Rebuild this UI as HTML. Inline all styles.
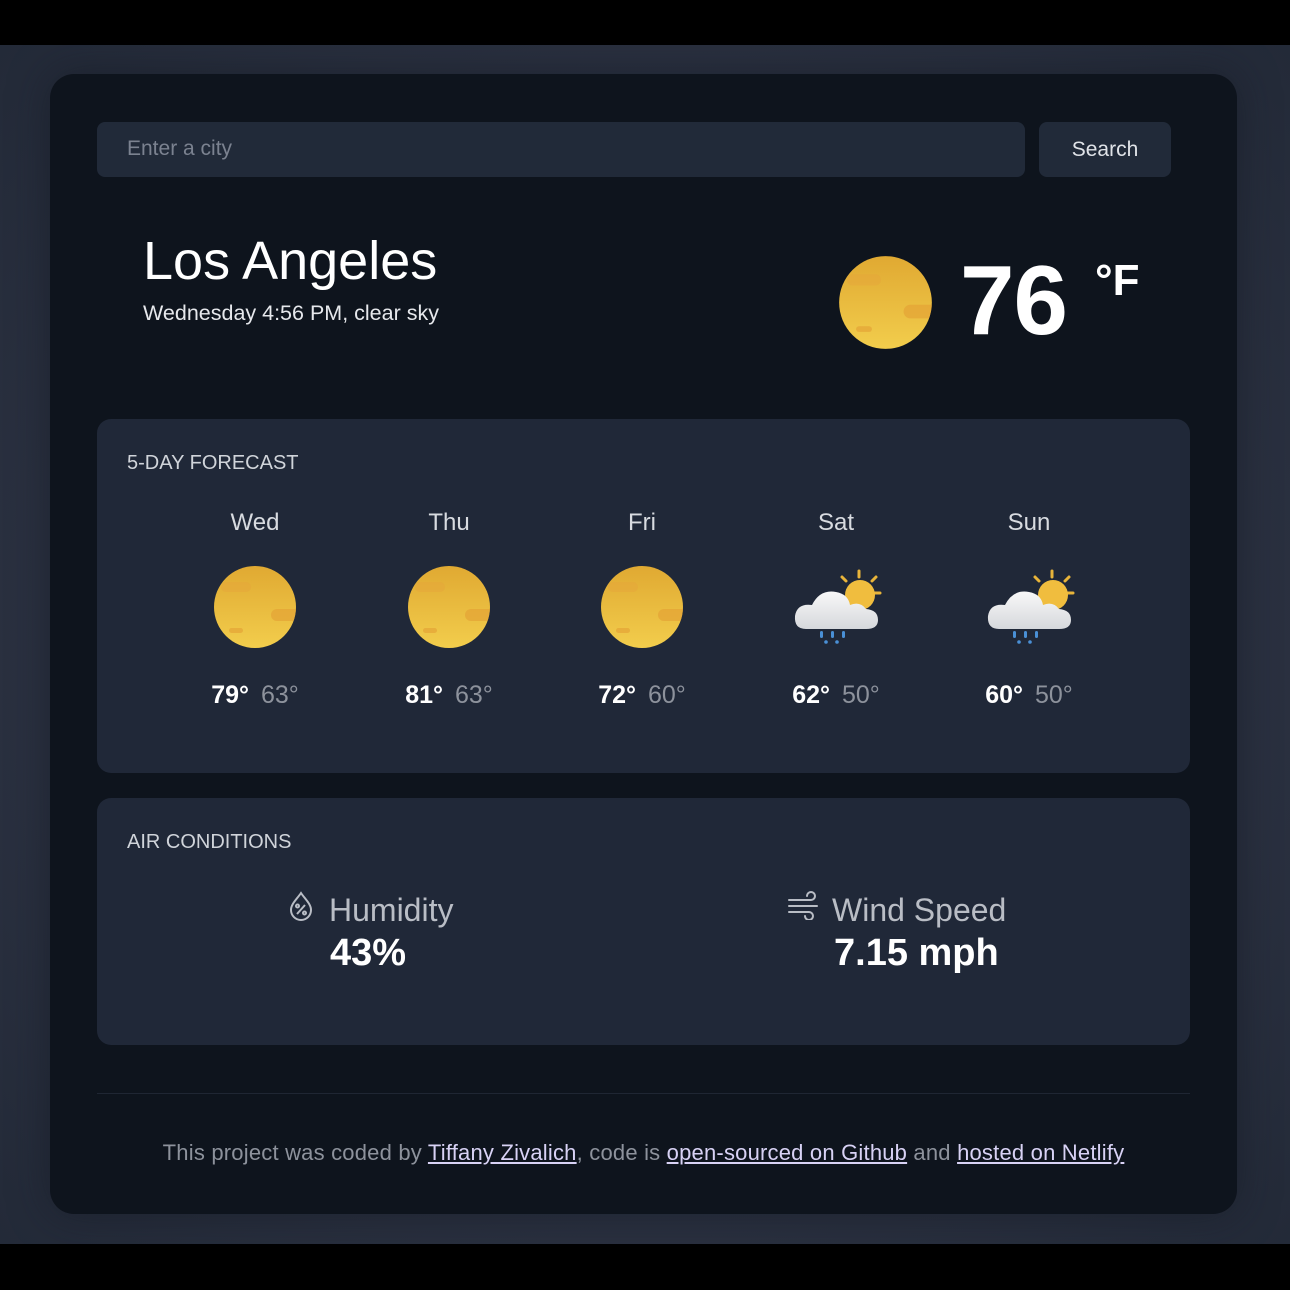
<!DOCTYPE html>
<html><head><style>
*{margin:0;padding:0;box-sizing:border-box}
body{width:1290px;height:1290px;background:#000;font-family:"Liberation Sans",sans-serif;position:relative;overflow:hidden}
.bg{position:absolute;left:0;top:45px;width:1290px;height:1199px;background:radial-gradient(ellipse at center,#3a4150 0%,#2c3242 60%,#232a38 100%)}
.card{position:absolute;left:50px;top:74px;width:1187px;height:1140px;background:#0e141d;border-radius:24px;box-shadow:0 0 40px rgba(20,25,35,.6)}
.abs{position:absolute}
.input{left:47px;top:48px;width:928px;height:55px;background:#212a39;border-radius:8px;color:#7b8290;font-size:21px;padding:15px 30px}
.btn{left:989px;top:48px;width:132px;height:55px;background:#212a39;border-radius:8px;color:#e0e3e8;font-size:21px;text-align:center;line-height:55px}
.city{left:93px;top:156px;color:#fff;font-size:54px}
.sub{left:93px;top:227px;color:#e6e8ec;font-size:21.5px}
.temp{left:910px;top:170px;color:#fff;font-size:98px;font-weight:bold;letter-spacing:-1px}
.unit{left:1045px;top:182px;color:#fff;font-size:44px;font-weight:bold}
.panel{left:47px;width:1093px;background:#202838;border-radius:14px}
.ttl{position:absolute;left:30px;color:#d0d4da;font-size:20px}
.col{position:absolute;top:0;width:194px;text-align:center}
.day{position:absolute;top:90px;width:194px;color:#d8dbe0;font-size:24px}
.ico{position:absolute;top:146px;left:55px}
.tmp{position:absolute;top:262px;width:194px;font-size:25px;color:#fff;font-weight:bold}
.tmp span{color:#8d929c;font-weight:normal;margin-left:12px}
.lab{color:#b9bdc5;font-size:32px}
.val{color:#fff;font-size:38px;font-weight:900}
.foot{left:0;width:1187px;top:1066px;text-align:center;color:#8d929c;font-size:22px;letter-spacing:0.2px}
.foot a{color:#d8d2f5;text-decoration:underline}
</style></head><body>
<div class="bg"></div>
<svg width="0" height="0" style="position:absolute">
<defs>
<linearGradient id="sg" x1="0" y1="0" x2="0" y2="1"><stop offset="0" stop-color="#e0a932"/><stop offset="1" stop-color="#f2cd4c"/></linearGradient>
<linearGradient id="cg" x1="0" y1="0" x2="0" y2="1"><stop offset="0" stop-color="#f8f8f8"/><stop offset="1" stop-color="#d6d8dc"/></linearGradient>
<clipPath id="sc"><circle cx="42" cy="42" r="41"/></clipPath>
<symbol id="sun" viewBox="0 0 84 84"><circle cx="42" cy="42" r="41" fill="url(#sg)"/><g clip-path="url(#sc)"><rect x="8" y="17" width="30" height="10" rx="5" fill="#e6a63a" opacity=".5"/><rect x="58" y="44" width="34" height="12" rx="6" fill="#e39f34" opacity=".6"/><rect x="16" y="63" width="14" height="5" rx="2.5" fill="#e39f34" opacity=".6"/></g></symbol>
<symbol id="rain" viewBox="0 0 130 100"><g stroke="#e8b43a" stroke-width="3" stroke-linecap="round"><line x1="83" y1="12" x2="83" y2="18"/><line x1="66" y1="18" x2="70" y2="22"/><line x1="100" y1="18" x2="96" y2="22"/><line x1="104" y1="34" x2="98" y2="34"/></g><circle cx="84" cy="36" r="15" fill="#f0bd3e"/><path d="M30 70 Q18 70 19 57 Q21 44 36 46 Q44 30 60 33 Q72 35 74 46 Q84 42 90 50 Q102 51 102 61 Q102 70 90 70 Z" fill="url(#cg)"/><g fill="#4a90d6"><rect x="44" y="72" width="3" height="7" rx="1.5"/><rect x="55" y="72" width="3" height="7" rx="1.5"/><rect x="66" y="72" width="3" height="7" rx="1.5"/><circle cx="50" cy="83" r="1.8"/><circle cx="61" cy="83" r="1.8"/></g></symbol>
</defs></svg>
<div class="card">
<div class="abs input">Enter a city</div>
<div class="abs btn">Search</div>
<div class="abs city">Los Angeles</div>
<div class="abs sub">Wednesday 4:56 PM, clear sky</div>
<svg class="abs" style="left:788px;top:181px" width="95" height="95"><use href="#sun"/></svg>
<div class="abs temp">76</div>
<div class="abs unit">°F</div>
<div class="abs panel" style="top:345px;height:354px">
<div class="ttl" style="top:33px">5-DAY FORECAST</div>
<div class="col" style="left:61px"><div class="day">Wed</div><svg class="ico" width="84" height="84"><use href="#sun"/></svg><div class="tmp">79°<span>63°</span></div></div>
<div class="col" style="left:255px"><div class="day">Thu</div><svg class="ico" width="84" height="84"><use href="#sun"/></svg><div class="tmp">81°<span>63°</span></div></div>
<div class="col" style="left:448px"><div class="day">Fri</div><svg class="ico" width="84" height="84"><use href="#sun"/></svg><div class="tmp">72°<span>60°</span></div></div>
<div class="col" style="left:642px"><div class="day">Sat</div><svg class="ico" style="left:37px;top:140px" width="130" height="100"><use href="#rain"/></svg><div class="tmp">62°<span>50°</span></div></div>
<div class="col" style="left:835px"><div class="day">Sun</div><svg class="ico" style="left:37px;top:140px" width="130" height="100"><use href="#rain"/></svg><div class="tmp">60°<span>50°</span></div></div>
</div>
<div class="abs panel" style="top:724px;height:247px">
<div class="ttl" style="top:33px">AIR CONDITIONS</div>
<svg class="abs" style="left:190px;top:92px" width="28" height="32" viewBox="0 0 28 32" fill="none" stroke="#b9bdc5" stroke-width="2"><path d="M14 3 C10 9 4 14 4 20 A10 10 0 0 0 24 20 C24 14 18 9 14 3Z"/><line x1="10" y1="24" x2="18" y2="15"/><circle cx="10.5" cy="16" r="1.5"/><circle cx="17.5" cy="23" r="1.5"/></svg>
<div class="abs lab" style="left:232px;top:94px">Humidity</div>
<div class="abs val" style="left:233px;top:134px">43%</div>
<svg class="abs" style="left:690px;top:92px" width="34" height="30" viewBox="0 0 34 30" fill="none" stroke="#b9bdc5" stroke-width="2" stroke-linecap="round"><path d="M2 10 H24 A4 4 0 1 0 20 6"/><path d="M2 16 H30"/><path d="M2 22 H22 A4 4 0 1 1 18 26"/></svg>
<div class="abs lab" style="left:735px;top:94px">Wind Speed</div>
<div class="abs val" style="left:737px;top:134px">7.15 mph</div>
</div>
<div class="abs" style="left:47px;top:1019px;width:1093px;height:1px;background:#1f2633"></div>
<div class="abs foot">This project was coded by <a>Tiffany Zivalich</a>, code is <a>open-sourced on Github</a> and <a>hosted on Netlify</a></div>
</div>
</body></html>
